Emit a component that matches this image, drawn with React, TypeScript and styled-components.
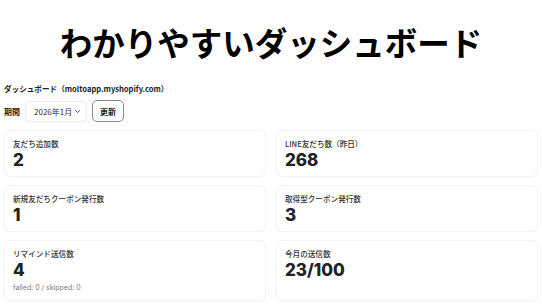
import styled, { createGlobalStyle } from 'styled-components'

const GlobalStyle = createGlobalStyle`
  html, body {
    margin: 0;
    padding: 0;
    background: #ffffff;
  }
  body {
    font-family: "Noto Sans CJK JP", "Noto Sans", sans-serif;
    color: #202223;
  }
`

type Stat = {
  label: string
  value: string
  note?: string
}

const stats: Stat[] = [
  { label: '友だち追加数', value: '2' },
  { label: 'LINE友だち数（昨日）', value: '268' },
  { label: '新規友だちクーポン発行数', value: '1' },
  { label: '取得型クーポン発行数', value: '3' },
  { label: 'リマインド送信数', value: '4', note: 'failed: 0 / skipped: 0' },
  { label: '今月の送信数', value: '23/100' },
]

const Page = styled.div`
  width: 542px;
  min-height: 305px;
  overflow: hidden;
`

const Hero = styled.header`
  height: 83px;
  display: flex;
  align-items: center;
  justify-content: center;
`

const HeroTitle = styled.h1`
  margin: 0;
  font-family: "Noto Sans CJK JP", sans-serif;
  font-size: 32.5px;
  font-weight: 700;
  letter-spacing: 0;
  color: #000000;
`

const Main = styled.main`
  padding: 0 4px;
`

const ShopHeading = styled.h2`
  margin: 0;
  font-size: 7.6px;
  font-weight: 700;
  line-height: 12px;
  color: #202223;
`

const Controls = styled.div`
  display: flex;
  align-items: center;
  gap: 5px;
  margin-top: 5px;
  height: 22px;
`

const ControlLabel = styled.span`
  font-size: 8px;
  font-weight: 700;
  color: #202223;
`

const Select = styled.div`
  display: flex;
  align-items: center;
  justify-content: space-between;
  box-sizing: border-box;
  width: 62px;
  height: 21px;
  padding: 0 5px 0 8px;
  border: 1px solid #ececec;
  border-radius: 4px;
  font-size: 8px;
  color: #303030;
  background: #ffffff;
`

const Chevron = styled.svg`
  width: 7px;
  height: 7px;
`

const UpdateButton = styled.button`
  box-sizing: border-box;
  height: 22px;
  width: 32px;
  padding: 0;
  border: 1px solid #8a8a8a;
  border-radius: 5px;
  background: #ffffff;
  font-family: "Noto Sans CJK JP", sans-serif;
  font-size: 8px;
  font-weight: 700;
  color: #202223;
`

const Grid = styled.section`
  display: grid;
  grid-template-columns: 1fr 1fr;
  grid-auto-rows: auto;
  column-gap: 10px;
  row-gap: 8px;
  margin-top: 8px;
`

const Card = styled.article`
  box-sizing: border-box;
  border: 1px solid #f3f3f3;
  border-radius: 6px;
  background: #ffffff;
  box-shadow: 0 1px 1px rgba(0, 0, 0, 0.02);
  padding: 8px 8px 7px;
  min-height: 45px;
`

const CardLabel = styled.p`
  margin: 0;
  font-size: 7.6px;
  font-weight: 500;
  line-height: 10px;
  color: #303030;
`

const CardValue = styled.p`
  margin: 2px 0 0;
  font-family: Inter, "Noto Sans", sans-serif;
  font-size: 17px;
  font-weight: 800;
  line-height: 18px;
  color: #202223;
`

const CardNote = styled.p`
  margin: 4px 0 1px;
  font-family: Inter, "Noto Sans", sans-serif;
  font-size: 7px;
  line-height: 9px;
  color: #7a7a7a;
`

export default function App() {
  return (
    <Page>
      <GlobalStyle />
      <Hero>
        <HeroTitle>わかりやすいダッシュボード</HeroTitle>
      </Hero>
      <Main>
        <ShopHeading>ダッシュボード（moltoapp.myshopify.com）</ShopHeading>
        <Controls>
          <ControlLabel>期間</ControlLabel>
          <Select>
            <span>2026年1月</span>
            <Chevron viewBox="0 0 10 10" fill="none" stroke="#4a4a4a" strokeWidth="1.4">
              <path d="M2 3.5 L5 6.5 L8 3.5" strokeLinecap="round" strokeLinejoin="round" />
            </Chevron>
          </Select>
          <UpdateButton type="button">更新</UpdateButton>
        </Controls>
        <Grid>
          {stats.map((s) => (
            <Card key={s.label}>
              <CardLabel>{s.label}</CardLabel>
              <CardValue>{s.value}</CardValue>
              {s.note ? <CardNote>{s.note}</CardNote> : null}
            </Card>
          ))}
        </Grid>
      </Main>
    </Page>
  )
}
